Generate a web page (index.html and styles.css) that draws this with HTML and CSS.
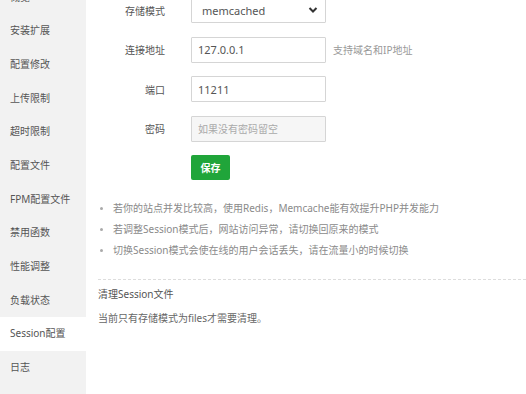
FILE: index.html
```html
<!DOCTYPE html>
<html lang="zh-CN">
<head>
    <meta charset="UTF-8">
    <meta name="viewport" content="width=device-width, initial-scale=1.0">
    <title>Session配置</title>
    <link rel="stylesheet" href="styles.css">
</head>
<body>

<div class="layout">
    <ul class="side-menu">
        <li>概览</li>
        <li>安装扩展</li>
        <li>配置修改</li>
        <li>上传限制</li>
        <li>超时限制</li>
        <li>配置文件</li>
        <li>FPM配置文件</li>
        <li>禁用函数</li>
        <li>性能调整</li>
        <li>负载状态</li>
        <li class="active">Session配置</li>
        <li>日志</li>
    </ul>

    <div class="content">
        <form class="session-form">
            <div class="form-row">
                <label for="mode">存储模式</label>
                <div class="select-wrap">
                    <select id="mode" name="mode">
                        <option>files</option>
                        <option>redis</option>
                        <option>memcache</option>
                        <option selected>memcached</option>
                    </select>
                    <svg class="select-arrow" width="10" height="8" viewBox="0 0 10 8"><path d="M1.5 2 L5 5.5 L8.5 2" fill="none" stroke="#333" stroke-width="2"/></svg>
                </div>
            </div>
            <div class="form-row">
                <label for="host">连接地址</label>
                <input type="text" id="host" name="host" value="127.0.0.1">
                <span class="hint">支持域名和IP地址</span>
            </div>
            <div class="form-row">
                <label for="port">端口</label>
                <input type="text" id="port" name="port" value="11211">
            </div>
            <div class="form-row">
                <label for="passwd">密码</label>
                <input type="text" id="passwd" name="passwd" class="input-muted" placeholder="如果没有密码留空">
            </div>
            <div class="form-row">
                <span class="label-empty"></span>
                <button type="button" class="btn-save">保存</button>
            </div>
        </form>

        <ul class="help">
            <li>若你的站点并发比较高，使用Redis，Memcache能有效提升PHP并发能力</li>
            <li>若调整Session模式后，网站访问异常，请切换回原来的模式</li>
            <li>切换Session模式会使在线的用户会话丢失，请在流量小的时候切换</li>
        </ul>

        <div class="clean-box">
            <div class="clean-title">清理Session文件</div>
            <div class="clean-desc">当前只有存储模式为files才需要清理。</div>
        </div>
    </div>
</div>

</body>
</html>
```

FILE: styles.css
```css
body {
    margin: 0;
    font-family: "Noto Sans", "Noto Sans CJK SC", sans-serif;
    color: #555;
    background: #fff;
    overflow: hidden;
}
.layout {
    display: flex;
    height: 394px;
}
.side-menu {
    list-style: none;
    margin: 0;
    padding: 0;
    width: 86px;
    flex-shrink: 0;
    background: #f2f2f2;
    margin-top: -19.5px;
    height: 414px;
}
.side-menu li {
    height: 33.7px;
    line-height: 33.7px;
    padding-left: 10px;
    font-size: 10px;
    color: #555;
}
.side-menu li.active {
    background: #fff;
}
.content {
    flex: 1;
    padding-left: 12px;
    margin-top: -3px;
}
.form-row {
    display: flex;
    align-items: center;
    margin-bottom: 13.5px;
    margin-left: -12px;
}
.form-row label, .label-empty {
    width: 79px;
    text-align: right;
    font-size: 10px;
    color: #555;
    margin-right: 26px;
    flex-shrink: 0;
}
.form-row input, .form-row select {
    width: 135px;
    height: 26px;
    box-sizing: border-box;
    border: 1px solid #d5d5d5;
    border-radius: 1px;
    padding: 0 6px;
    font-family: inherit;
    font-size: 11px;
    color: #555;
    background: #fff;
    outline: none;
}
.form-row input.input-muted {
    background: #f6f6f6;
}
.form-row input::placeholder {
    color: #aaa;
    font-size: 10px;
}
.select-wrap {
    position: relative;
}
.form-row select {
    appearance: none;
    -webkit-appearance: none;
    padding-left: 10px;
}
.select-arrow {
    position: absolute;
    right: 8px;
    top: 9px;
    pointer-events: none;
}
.hint {
    margin-left: 7px;
    font-size: 10px;
    color: #999;
}
.btn-save {
    width: 39px;
    height: 25px;
    border: none;
    border-radius: 2px;
    background: #20a53a;
    color: #fff;
    font-family: inherit;
    font-size: 10px;
    font-weight: bold;
    padding: 0;
    cursor: pointer;
}
.session-form .form-row:last-child {
    margin-bottom: 0;
}
.help {
    list-style: none;
    margin: 17.5px 0 0;
    padding: 0 0 18px;
    border-bottom: 1px dashed #ddd;
}
.help li {
    position: relative;
    line-height: 21px;
    font-size: 10px;
    color: #8a8a8a;
    padding-left: 15px;
}
.help li::before {
    content: "";
    position: absolute;
    left: 2px;
    top: 9px;
    width: 3px;
    height: 3px;
    border-radius: 50%;
    background: #aaa;
}
.clean-box {
    padding-top: 4px;
}
.clean-title {
    font-size: 10px;
    line-height: 20px;
    color: #555;
}
.clean-desc {
    margin-top: 4px;
    font-size: 10px;
    line-height: 20px;
    color: #666;
}
```
